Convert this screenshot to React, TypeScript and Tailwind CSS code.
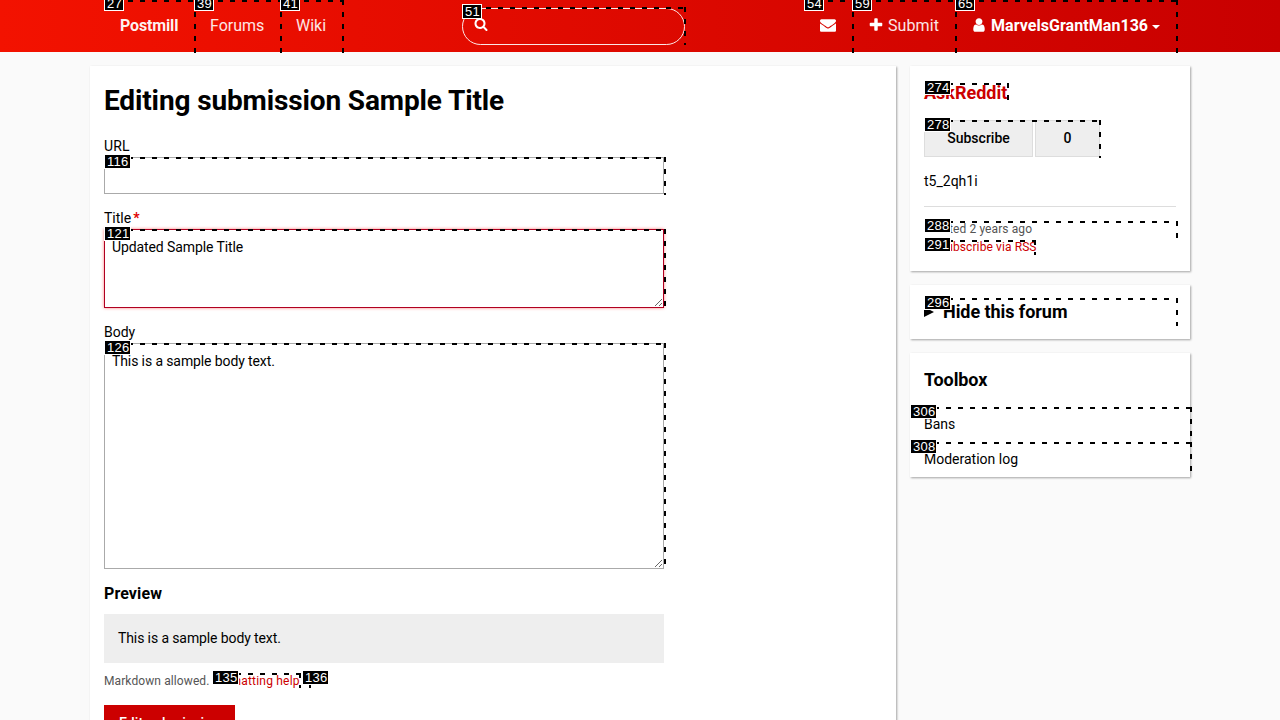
import React from "react";

type Mark = { id: number; x: number; y: number; w: number; h: number };

const marks: Mark[] = [
  { id: 27, x: 104, y: 0, w: 92, h: 53 },
  { id: 39, x: 194, y: 0, w: 88, h: 53 },
  { id: 41, x: 280, y: 0, w: 64, h: 53 },
  { id: 51, x: 462, y: 7, w: 224, h: 38 },
  { id: 54, x: 804, y: 0, w: 50, h: 53 },
  { id: 59, x: 852, y: 0, w: 105, h: 53 },
  { id: 65, x: 955, y: 0, w: 223, h: 53 },
  { id: 116, x: 104, y: 157, w: 562, h: 38 },
  { id: 121, x: 104, y: 229, w: 562, h: 79 },
  { id: 126, x: 104, y: 343, w: 562, h: 226 },
  { id: 135, x: 212, y: 673, w: 89, h: 15 },
  { id: 136, x: 302, y: 673, w: 9, h: 15 },
  { id: 274, x: 924, y: 83, w: 85, h: 17 },
  { id: 278, x: 924, y: 120, w: 177, h: 38 },
  { id: 288, x: 924, y: 221, w: 254, h: 17 },
  { id: 291, x: 924, y: 240, w: 112, h: 15 },
  { id: 296, x: 924, y: 298, w: 254, h: 28 },
  { id: 306, x: 910, y: 407, w: 282, h: 36 },
  { id: 308, x: 910, y: 442, w: 282, h: 36 },
];

function MarkLayer() {
  return (
    <div className="pointer-events-none absolute inset-0 z-10 overflow-hidden">
      {marks.map((m) => (
        <div key={m.id} className="absolute" style={{ left: m.x, top: m.y, width: m.w, height: m.h }}>
          <div className="absolute inset-x-0 top-0 h-[2px] bg-[repeating-linear-gradient(to_right,#000_0px,#000_5px,transparent_5px,transparent_12px)]" />
          <div className="absolute inset-y-0 right-0 w-[2px] bg-[repeating-linear-gradient(to_bottom,#000_0px,#000_5px,transparent_5px,transparent_12px)]" />
        </div>
      ))}
      {marks.map((m) => (
        <div
          key={m.id}
          className="absolute h-[15px] border border-white bg-black px-[2px] font-['Liberation_Sans',sans-serif] text-[13px] leading-[13px] tracking-[0.3px] whitespace-nowrap text-white"
          style={{ left: m.x, top: m.y === 0 ? -4 : m.y - 3, width: m.id < 100 ? 20 : 27 }}
        >
          {m.id}
        </div>
      ))}
    </div>
  );
}

function Icon({ d, className }: { d: string; className: string }) {
  return (
    <svg viewBox="0 0 1792 1792" fill="currentColor" className={className}>
      <path d={d} />
    </svg>
  );
}

const envelope =
  "M1792 710v794q0 66-47 113t-113 47h-1472q-66 0-113-47t-47-113v-794q44 49 101 87 362 246 497 345 57 42 92.5 65.5t94.5 48 110 24.5h2q51 0 110-24.5t94.5-48 92.5-65.5q170-123 498-345 57-39 100-87zm0-294q0 79-49 151t-122 123q-376 261-468 325-10 7-42.5 31t-54 38.5-52 32.5-57.5 27-50 9h-2q-23 0-50-9t-57.5-27-52-32.5-54-38.5-42.5-31q-91-64-262-182.5t-205-142.5q-62-42-117-115.5t-55-136.5q0-78 41.5-130t118.5-52h1472q65 0 112.5 47t47.5 113z";
const plus =
  "M1600 736v192q0 40-28 68t-68 28h-416v416q0 40-28 68t-68 28h-192q-40 0-68-28t-28-68v-416h-416q-40 0-68-28t-28-68v-192q0-40 28-68t68-28h416v-416q0-40 28-68t68-28h192q40 0 68 28t28 68v416h416q40 0 68 28t28 68z";
const user =
  "M1536 1399q0 109-62.5 187t-150.5 78h-854q-88 0-150.5-78t-62.5-187q0-85 8.5-160.5t31.5-152 58.5-131 94-89 134.5-34.5q131 128 313 128t313-128q76 0 134.5 34.5t94 89 58.5 131 31.5 152 8.5 160.5zm-256-887q0 159-112.5 271.5t-271.5 112.5-271.5-112.5-112.5-271.5 112.5-271.5 271.5-112.5 271.5 112.5 112.5 271.5z";
const search =
  "M1216 832q0-185-131.5-316.5t-316.5-131.5-316.5 131.5-131.5 316.5 131.5 316.5 316.5 131.5 316.5-131.5 131.5-316.5zm512 832q0 52-38 90t-90 38q-54 0-90-38l-343-342q-179 124-399 124-143 0-273.5-55.5t-225-150-150-225-55.5-273.5 55.5-273.5 150-225 225-150 273.5-55.5 273.5 55.5 225 150 150 225 55.5 273.5q0 220-124 399l343 343q37 37 37 90z";

function Header() {
  return (
    <header className="flex h-[52px] shrink-0 items-center bg-[linear-gradient(to_right,#f31200,#c80000)] text-base text-white/90">
      <nav className="ml-[120px] flex w-[342px] items-center">
        <a className="w-[90px] font-bold tracking-[-0.15px] text-white/95">Postmill</a>
        <a className="w-[86px]">Forums</a>
        <a>Wiki</a>
      </nav>
      <div className="mt-[1px] flex h-[37px] w-[223px] items-start rounded-full border border-white/90 pt-[8px] pl-[11px]">
        <Icon d={search} className="size-[14px] text-white" />
      </div>
      <nav className="ml-[135px] flex items-center">
        <a className="w-[48px]">
          <Icon d={envelope} className="mb-[2px] size-4 text-white" />
        </a>
        <a className="flex w-[103px] items-center gap-1">
          <Icon d={plus} className="mb-[2px] size-4 text-white" />
          <span className="tracking-[0.1px]">Submit</span>
        </a>
        <a className="flex items-center gap-1 font-bold text-white">
          <Icon d={user} className="mb-[2px] size-4" />
          <span className="tracking-[0.05px]">MarvelsGrantMan136</span>
          <svg viewBox="0 0 8 4" fill="currentColor" className="mt-[2px] h-1 w-2">
            <path d="M0 0h8L4 4z" />
          </svg>
        </a>
      </nav>
    </header>
  );
}

const card = "bg-white shadow-[1px_1px_2px_rgba(0,0,0,0.35)]";

export default function App() {
  return (
    <div className="relative flex h-[720px] w-[1280px] flex-col overflow-hidden bg-[#fafafa] font-[Roboto,sans-serif] text-sm leading-[21px] text-black">
      <Header />
      <div className="flex items-start gap-[14px] px-[90px] pt-[14px]">
        <main className={`${card} h-[700px] w-[806px] px-[14px] pt-[15px]`}>
          <h1 className="mb-4 text-[28px] leading-[39px] font-bold tracking-[-0.13px]">Editing submission Sample Title</h1>
          <form className="flex w-[560px] flex-col">
            <label className="tracking-[0.2px]">URL</label>
            <input className="mb-[14px] h-[37px] border border-[#aaa] px-[7px]" />
            <label className="flex gap-[2px]">
              Title <span className="font-bold text-[#e00000]">*</span>
            </label>
            <textarea
              className="mb-[14px] h-[79px] resize-y border border-[#b00020] px-[7px] py-[7px] tracking-[-0.1px] shadow-[0_0_3px_rgba(255,0,0,0.5)]"
              defaultValue="Updated Sample Title"
            />
            <label>Body</label>
            <textarea
              className="mb-[14px] h-[226px] resize-y border border-[#aaa] px-[7px] py-[7px] tracking-[-0.11px]"
              defaultValue="This is a sample body text."
            />
            <h3 className="text-base leading-[22px] font-bold tracking-[0.1px]">Preview</h3>
            <div className="mt-[9px] bg-[#eee] p-[14px] tracking-[-0.11px]">This is a sample body text.</div>
            <p className="mt-[9px] flex gap-[3px] text-xs leading-[18px] tracking-[0.1px] text-[#555]">
              Markdown allowed. <a className="tracking-[0.2px] text-[#c00]">Formatting help</a>
            </p>
            <button className="mt-[15px] h-[37px] w-[131px] bg-[#c00] font-medium tracking-[0.1px] text-white">
              Edit submission
            </button>
          </form>
        </main>
        <aside className="flex w-[280px] flex-col gap-[14px]">
          <section className={`${card} h-[205px] p-[14px]`}>
            <h2 className="text-lg leading-[25px] font-bold text-[#c00]">AskReddit</h2>
            <div className="mt-[15px] flex h-[37px] gap-[2px] font-medium">
              <button className="w-[109px] border border-[#ddd] bg-[#eee]">Subscribe</button>
              <span className="flex w-[65px] items-center justify-center border border-[#ddd] bg-[#eee]">0</span>
            </div>
            <p className="mt-[14px]">t5_2qh1i</p>
            <div className="mt-[14px] border-t border-[#ddd] pt-[13px] text-xs leading-[18px] tracking-[0.1px]">
              <p className="text-[#555]">Created 2 years ago</p>
              <a className="flex items-center gap-[3px] text-[#c00]">
                <svg viewBox="0 0 12 12" fill="none" stroke="currentColor" strokeWidth="1.6" className="size-3">
                  <circle cx="2.6" cy="9.4" r="0.8" fill="currentColor" />
                  <path d="M1 5.5a5.5 5.5 0 0 1 5.5 5.5M1 2a9 9 0 0 1 9 9" />
                </svg>
                Subscribe via RSS
              </a>
            </div>
          </section>
          <section className={`${card} h-[54px] p-[14px]`}>
            <h2 className="flex items-center text-lg leading-[25px] font-bold tracking-[-0.06px]">
              <svg viewBox="0 0 10 10" className="mr-[9px] size-[10px]">
                <path d="M0 0l10 5-10 5z" />
              </svg>
              Hide this forum
            </h2>
          </section>
          <section className={`${card} h-[124px] pt-[14px]`}>
            <h2 className="mb-[15px] px-[14px] text-lg leading-[25px] font-bold tracking-[-0.1px]">Toolbox</h2>
            <ul>
              <li className="h-[35px] px-[14px] py-[7px]">Bans</li>
              <li className="h-[35px] px-[14px] py-[7px]">Moderation log</li>
            </ul>
          </section>
        </aside>
      </div>
      <MarkLayer />
    </div>
  );
}
